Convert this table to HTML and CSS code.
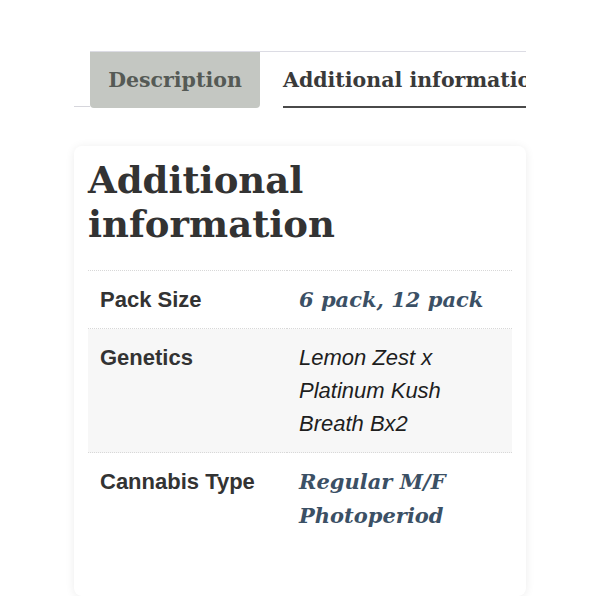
FILE: index.html
```html
<!DOCTYPE html>
<html lang="en">
<head>
<meta charset="utf-8">
<title>Additional information</title>
<link rel="stylesheet" href="styles.css">
</head>
<body>
<div class="page">
  <div class="tabs">
    <div class="tabs-lead"></div>
    <div class="tabs-list">
      <div class="tab tab-active">Description</div>
      <div class="tab tab-current"><span class="tab-label">Additional information</span></div>
    </div>
  </div>
  <div class="card">
    <h2 class="title">Additional information</h2>
    <table class="attrs">
      <tr class="row">
        <th class="label">Pack Size</th>
        <td class="value value-link">6 pack, 12 pack</td>
      </tr>
      <tr class="row row-alt">
        <th class="label">Genetics</th>
        <td class="value value-plain">Lemon Zest x Platinum Kush Breath Bx2</td>
      </tr>
      <tr class="row row-last">
        <th class="label">Cannabis Type</th>
        <td class="value value-link value-narrow">Regular M/F Photoperiod</td>
      </tr>
    </table>
  </div>
</div>
</body>
</html>
```
FILE: styles.css
```css
html, body {
  margin: 0;
  padding: 0;
  background: #ffffff;
}
.page {
  width: 452px;
  margin-left: 74px;
  padding-top: 51px;
}
.tabs {
  display: flex;
  align-items: flex-end;
  height: 57px;
}
.tabs-lead {
  width: 16px;
  height: 0;
  border-bottom: 1px solid #d6d6dc;
  margin-bottom: 1px;
}
.tabs-list {
  flex: 1;
  display: flex;
  height: 56px;
  border-top: 1px solid #dcdce4;
  overflow: hidden;
}
.tab {
  font-family: "DejaVu Serif", Georgia, serif;
  font-weight: bold;
  font-size: 20.5px;
  color: #555a55;
  white-space: nowrap;
  box-sizing: border-box;
  display: flex;
  align-items: center;
  flex: none;
}
.tab-active {
  width: 170px;
  justify-content: center;
  background: #c4c7c2;
  border-radius: 0 0 4px 4px;
}
.tab-current {
  margin-left: 23px;
  align-items: stretch;
  color: #3a3a3a;
}
.tab-label {
  display: flex;
  align-items: center;
  border-bottom: 2px solid #4a4a4a;
  padding-top: 2px;
}
.card {
  box-sizing: border-box;
  margin-top: 38px;
  background: #ffffff;
  border-radius: 8px;
  box-shadow: 0 1px 10px rgba(0, 0, 0, 0.08);
  padding: 12px 14px 0;
  height: 450px;
}
.title {
  margin: 0;
  font-family: "DejaVu Serif", Georgia, serif;
  font-weight: bold;
  font-size: 37px;
  line-height: 44px;
  color: #333333;
  width: 300px;
}
.attrs {
  margin-top: 24px;
  width: 100%;
  border-collapse: collapse;
  border-top: 1px dotted #d8d8d8;
}
.row {
  border-bottom: 1px dotted #d8d8d8;
}
.row-last {
  border-bottom: none;
}
.row-alt {
  background: #f7f7f7;
}
.label, .value {
  vertical-align: top;
  text-align: left;
  padding: 12px 12px 12px;
  font-size: 22px;
  line-height: 33px;
}
.label {
  width: 175px;
  font-family: "Liberation Sans", Arial, sans-serif;
  font-weight: bold;
  color: #333333;
}
.value-plain {
  font-family: "Liberation Sans", Arial, sans-serif;
  font-style: italic;
  color: #1e1e1e;
  padding-right: 60px;
}
.value-link {
  font-family: "DejaVu Serif", Georgia, serif;
  font-weight: bold;
  font-style: italic;
  font-size: 21px;
  line-height: 33px;
  color: #3b5065;
  white-space: nowrap;
}
.value-narrow {
  white-space: normal;
  line-height: 34px;
  padding-right: 40px;
}
```
